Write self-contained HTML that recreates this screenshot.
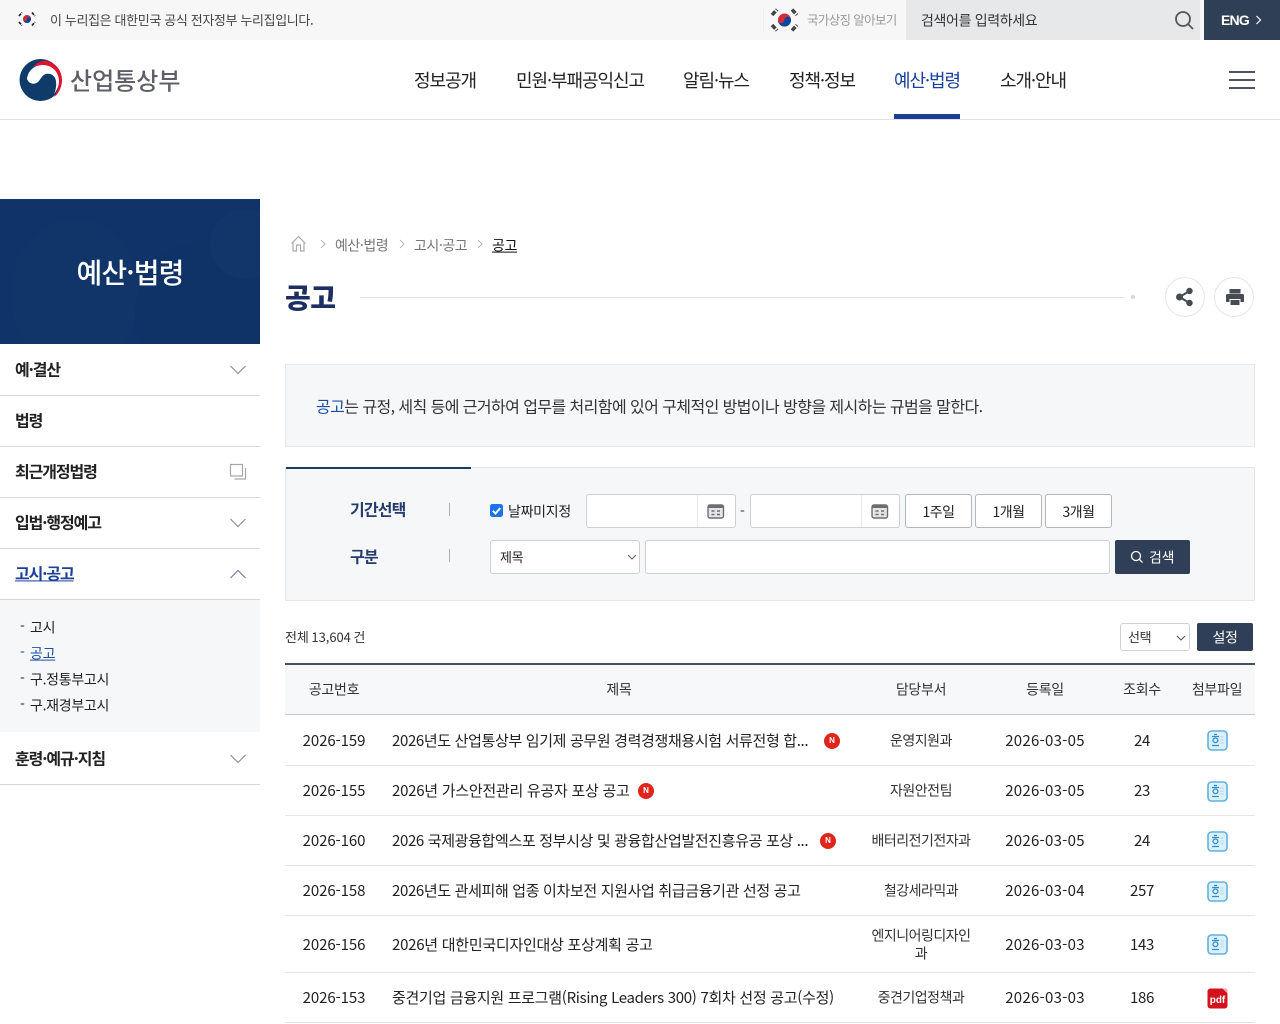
<!DOCTYPE html>
<html lang="ko"><head><meta charset="utf-8"><title>공고</title>
<style>
*{box-sizing:border-box}
html,body{margin:0;padding:0;width:1280px;height:1024px;overflow:hidden;background:#fff}
body{position:relative;font-family:"Liberation Sans","Noto Sans CJK KR",sans-serif;color:#222}
.a{position:absolute}
.t{position:absolute;white-space:nowrap;font-family:"Noto Sans CJK KR","Liberation Sans",sans-serif;transform:translateY(-50%);line-height:1.2}
.c{transform:translate(-50%,-50%)}
.nav{font-size:18px;letter-spacing:-1.05px;color:#222;top:81px}
.side{left:15px;font-size:16px;font-weight:700;letter-spacing:-1.1px;color:#222}
.ln{position:absolute;left:0;width:260px;height:1px;background:#d4d6d8}
.sub{left:30px;font-size:14px;letter-spacing:-.3px;color:#222}
.dash{left:20px;font-size:14px}
.row{position:absolute;left:285px;width:970px;height:1px;background:#e3e5e7}
.cell{font-size:15px;letter-spacing:-.35px;color:#222}
.num{font-size:15px;letter-spacing:-.1px;color:#222}
.date{font-size:15px;letter-spacing:.25px;color:#222}
.ttl{left:392px;font-size:15px;letter-spacing:-.35px;color:#222}
.dept{font-size:14px;letter-spacing:-.5px;color:#333}
.th{font-size:14px;letter-spacing:-.3px;color:#333;top:690px}
.box{position:absolute;background:#fff;border:1px solid #cdd1d5;border-radius:3px}
.btn{position:absolute;top:494px;height:34px;background:#fff;border:1px solid #b4b7ba;border-radius:3px;font-family:"Noto Sans CJK KR","Liberation Sans",sans-serif;font-size:14px;letter-spacing:-.5px;text-align:center;line-height:34px;color:#222}
.n{position:absolute;width:16px;height:16px;border-radius:50%;background:#e0261c;color:#fff;font:700 8px/16px "Liberation Sans",sans-serif;text-align:center}
.hwp{position:absolute;left:1207px;width:21px;height:21px}
</style></head><body>

<!-- top bar -->
<div class="a" style="left:0;top:0;width:1280px;height:40px;background:#f7f7f8"></div>
<svg class="a" style="left:18px;top:11px" width="18" height="16" viewBox="0 0 18 16"><circle cx="9" cy="8" r="4" fill="#cd2e3a"/><path d="M5 8a4 4 0 0 0 8 0a2 2 0 0 0-4 0a2 2 0 0 1-4 0z" fill="#0047a0"/><g stroke="#222" stroke-width="1.7" stroke-dasharray="3 1"><path d="M1 5l3-3.500M14 1.500l3 3.500M1 11l3 3.500M14 14.500l3-3.500"/></g></svg>
<div class="t" style="left:50px;top:19.500px;font-size:13px;letter-spacing:-.36px;color:#444">이 누리집은 대한민국 공식 전자정부 누리집입니다.</div>
<div class="a" style="left:763px;top:8px;width:1px;height:24px;background:#eee"></div>
<svg class="a" style="left:770px;top:8px" width="29" height="24" viewBox="0 0 29 24"><circle cx="14.500" cy="12" r="6.500" fill="#cd2e3a"/><path d="M8 12a6.500 6.500 0 0 0 13 0a3.250 3.250 0 0 0-6.500 0a3.250 3.250 0 0 1-6.500 0z" fill="#0047a0"/><g stroke="#444" stroke-width="3.500" stroke-dasharray="5 1.500"><path d="M2 7l5-5.500M22 1.500l5 5.500M2 17l5 5.500M22 22.500l5-5.500" /></g></svg>
<div class="t" style="left:807px;top:19px;font-size:12.500px;letter-spacing:-.65px;color:#9a9a9a">국가상징 알아보기</div>
<div class="a" style="left:906px;top:0;width:294px;height:40px;background:#e7e8ea"></div>
<div class="t" style="left:921px;top:21px;font-size:14px;letter-spacing:-.35px;color:#333">검색어를 입력하세요</div>
<svg class="a" style="left:1173px;top:9px" width="22" height="22" viewBox="0 0 22 22" fill="none" stroke="#555" stroke-width="1.800"><circle cx="10" cy="10" r="7"/><path d="M15 15l5 5"/></svg>
<div class="a" style="left:1204px;top:0;width:76px;height:40px;background:#2f3f55"></div>
<div class="t" style="left:1221px;top:20px;font:700 14px 'Liberation Sans',sans-serif;letter-spacing:-.8px;color:#fff">ENG</div>
<svg class="a" style="left:1255px;top:15px" width="7" height="10" viewBox="0 0 7 10" fill="none" stroke="#fff" stroke-width="1.200"><path d="M1.500 1l4 4-4 4"/></svg>

<!-- header -->
<svg class="a" style="left:19px;top:59px" width="44" height="42" viewBox="0 0 44 42">
<circle cx="21.500" cy="21" r="21" fill="#0f3b6b"/>
<path d="M14 8C18 3 24 1 28 2C37 4 43 12 43 21C43 29 39 35 35 38C38 33 40 27 40 22C40 13 33 6.500 25 6C21 5.800 17 6.500 14 8z" fill="#e1122d"/>
<path d="M8 20C9 11 16 6 24 6C33 6 40 13 40 22C40 27 38 31 35 35C37 31 37.500 26 37 22C36 16 31 14 27 15C23 16 22 20 19 23C15 26 10 25 8 20z" fill="#fff"/>
</svg>
<div class="t" style="left:70px;top:80px;font-size:24px;font-weight:500;letter-spacing:0;color:#5d6167">산업통상부</div>

<div class="t nav" style="left:414px">정보공개</div>
<div class="t nav" style="left:516px">민원·부패공익신고</div>
<div class="t nav" style="left:683px">알림·뉴스</div>
<div class="t nav" style="left:789px">정책·정보</div>
<div class="t nav" style="left:894px;color:#1b3f9c">예산·법령</div>
<div class="t nav" style="left:1000px">소개·안내</div>
<div class="a" style="left:1229px;top:71px;width:26px;height:2px;background:#4a5568"></div>
<div class="a" style="left:1229px;top:79px;width:26px;height:2px;background:#4a5568"></div>
<div class="a" style="left:1229px;top:87px;width:26px;height:2px;background:#4a5568"></div>
<div class="a" style="left:0;top:119px;width:1280px;height:1px;background:#e1e2e4"></div>
<div class="a" style="left:894px;top:114px;width:66px;height:5px;background:#1c3f9a"></div>

<!-- sidebar -->
<div class="a" style="left:0;top:199px;width:260px;height:145px;background:#10346a;overflow:hidden">
<div class="a" style="left:10px;top:20px;width:130px;height:150px;border-radius:50%;background:#113568"></div>
<div class="a" style="left:135px;top:40px;width:150px;height:150px;border-radius:50%;background:#0f3267"></div>
<div class="a" style="left:210px;top:10px;width:70px;height:70px;border-radius:50%;background:#11366a"></div>
</div>
<div class="t c" style="left:130px;top:273px;font-size:28px;font-weight:500;letter-spacing:-.9px;color:#fff">예산·법령</div>

<div class="t side" style="top:369px">예·결산</div>
<div class="ln" style="top:395px"></div>
<div class="t side" style="top:420px">법령</div>
<div class="ln" style="top:446px"></div>
<div class="t side" style="top:471px">최근개정법령</div>
<div class="ln" style="top:497px"></div>
<div class="t side" style="top:522px">입법·행정예고</div>
<div class="ln" style="top:548px"></div>
<div class="t side" style="top:573px;color:#1c3f9a;text-decoration:underline">고시·공고</div>
<div class="ln" style="top:599px"></div>
<div class="a" style="left:0;top:600px;width:260px;height:132px;background:#f5f7f9"></div>
<div class="t dash" style="top:627px">-</div><div class="t sub" style="top:628px">고시</div>
<div class="t dash" style="top:653px;color:#1c3f9a">-</div><div class="t sub" style="top:654px;color:#1c4fa8;text-decoration:underline">공고</div>
<div class="t dash" style="top:679px">-</div><div class="t sub" style="top:680px">구.정통부고시</div>
<div class="t dash" style="top:705px">-</div><div class="t sub" style="top:706px">구.재경부고시</div>
<div class="t side" style="top:758px">훈령·예규·지침</div>
<div class="ln" style="top:784px"></div>
<svg class="a" style="left:0;top:0" width="260" height="790" fill="none" stroke="#8d9299" stroke-width="1.200">
<path d="M230.500 366l7.500 7.500 7.500-7.500M230.500 519l7.500 7.500 7.500-7.500M230.500 755l7.500 7.500 7.500-7.500"/>
<path d="M230.500 578l7.500-7.500 7.500 7.500" stroke="#6f7fa8"/>
<path d="M230.500 464.500h12v11.500h-12zM245.500 468v11h-11" stroke="#a5a8ac"/>
</svg>

<!-- breadcrumb -->
<svg class="a" style="left:290px;top:235px" width="18" height="18" viewBox="0 0 18 18" fill="none" stroke="#a8abae" stroke-width="1.200"><path d="M1.500 8.500L8.500 1.500l7 7M3 7v9h3.500v-6h4v6H14V7"/></svg>
<svg class="a" style="left:320px;top:239px" width="170" height="10" fill="none" stroke="#b3b5b8" stroke-width="1"><path d="M1 1l4 4-4 4M80 1l4 4-4 4M158 1l4 4-4 4"/></svg>
<div class="t" style="left:335px;top:246px;font-size:14px;letter-spacing:-.45px;color:#777">예산·법령</div>
<div class="t" style="left:414px;top:246px;font-size:14px;letter-spacing:-.45px;color:#777">고시·공고</div>
<div class="t" style="left:492px;top:246px;font-size:14px;letter-spacing:-.35px;color:#111;text-decoration:underline">공고</div>

<div class="t" style="left:285px;top:298px;font-size:28px;font-weight:900;letter-spacing:-.5px;color:#1b2f63">공고</div>
<div class="a" style="left:360px;top:297px;width:764px;height:1px;background:#dfe0e2"></div>
<div class="a" style="left:1131px;top:295px;width:4px;height:4px;border-radius:50%;background:#d4d6d8"></div>
<div class="a" style="left:1165px;top:277px;width:40px;height:40px;border-radius:50%;border:1px solid #e5e6e8;background:#fff"></div>
<div class="a" style="left:1214px;top:277px;width:40px;height:40px;border-radius:50%;border:1px solid #e5e6e8;background:#fff"></div>
<svg class="a" style="left:1175px;top:287px" width="20" height="20" viewBox="0 0 20 20" fill="#474b52"><circle cx="4.500" cy="10" r="3.500"/><circle cx="14.500" cy="4" r="3.200"/><circle cx="14.500" cy="16" r="3.200"/><path d="M4.500 10L14.500 4M4.500 10l10 6" stroke="#474b52" stroke-width="2"/></svg>
<svg class="a" style="left:1225px;top:287px" width="20" height="20" viewBox="0 0 20 20" fill="#474b52"><path d="M4.500 2h11v4.500h-11zM2.500 7h15A1.500 1.500 0 0 1 19 8.500V15h-3.500v-3h-11v3H1V8.500A1.500 1.500 0 0 1 2.500 7zM5.500 13h9v5h-9z"/></svg>

<!-- notice -->
<div class="a" style="left:285px;top:364px;width:970px;height:83px;background:#f5f7f9;border:1px solid #e6e8ea"></div>
<div class="t" style="left:316px;top:406px;font-size:16px;letter-spacing:-.58px;color:#333"><span style="color:#1c4fa8">공고</span>는 규정, 세칙 등에 근거하여 업무를 처리함에 있어 구체적인 방법이나 방향을 제시하는 규범을 말한다.</div>

<!-- search -->
<div class="a" style="left:285px;top:467px;width:970px;height:134px;background:#f5f7f9;border:1px solid #e3e5e7"></div>
<div class="a" style="left:286px;top:467px;width:185px;height:2px;background:#1e3a5f"></div>
<div class="t" style="left:350px;top:509px;font-size:16px;font-weight:700;letter-spacing:-.85px;color:#263c6e">기간선택</div>
<div class="t" style="left:350px;top:556px;font-size:16px;font-weight:700;letter-spacing:-.8px;color:#263c6e">구분</div>
<div class="a" style="left:449px;top:503px;width:1px;height:13px;background:#aeb2b6"></div>
<div class="a" style="left:449px;top:549px;width:1px;height:13px;background:#aeb2b6"></div>
<svg class="a" style="left:490px;top:504px" width="13" height="13" viewBox="0 0 13 13"><rect width="13" height="13" rx="2.500" fill="#1a73e8"/><path d="M2.800 6.800l2.700 2.700 4.800-5.500" fill="none" stroke="#fff" stroke-width="2"/></svg>
<div class="t" style="left:508px;top:512px;font-size:14px;letter-spacing:-.3px;color:#222">날짜미지정</div>
<div class="box" style="left:586px;top:494px;width:150px;height:34px"></div>
<div class="a" style="left:697px;top:495px;width:1px;height:32px;background:#e8eaec"></div>
<div class="t" style="left:740px;top:512px;font-size:14px;color:#333">-</div>
<div class="box" style="left:750px;top:494px;width:150px;height:34px"></div>
<div class="a" style="left:861px;top:495px;width:1px;height:32px;background:#e8eaec"></div>
<svg class="a" style="left:707px;top:503px" width="18" height="16" viewBox="0 0 18 16"><rect x="1" y="2" width="15.500" height="13" rx="2" fill="#e4e5e6" stroke="#6b6f74" stroke-width="1.400"/><rect x="1" y="1.500" width="15.500" height="3.500" rx="1.500" fill="#6b6f74"/><path d="M4.500 8h3M10 8h3M4.500 11.500h3M10 11.500h3" stroke="#6b6f74" stroke-width="1.400"/></svg>
<svg class="a" style="left:871px;top:503px" width="18" height="16" viewBox="0 0 18 16"><rect x="1" y="2" width="15.500" height="13" rx="2" fill="#e4e5e6" stroke="#6b6f74" stroke-width="1.400"/><rect x="1" y="1.500" width="15.500" height="3.500" rx="1.500" fill="#6b6f74"/><path d="M4.500 8h3M10 8h3M4.500 11.500h3M10 11.500h3" stroke="#6b6f74" stroke-width="1.400"/></svg>
<div class="btn" style="left:905px;width:67px">1주일</div>
<div class="btn" style="left:975px;width:67px">1개월</div>
<div class="btn" style="left:1045px;width:67px">3개월</div>
<div class="box" style="left:490px;top:540px;width:150px;height:34px"></div>
<div class="t" style="left:500px;top:557px;font-size:13px;letter-spacing:-.3px;color:#222">제목</div>
<svg class="a" style="left:627px;top:553px" width="10" height="8" fill="none" stroke="#666" stroke-width="1.100"><path d="M1 2l4 4 4-4"/></svg>
<div class="box" style="left:645px;top:540px;width:465px;height:34px"></div>
<div class="a" style="left:1115px;top:540px;width:75px;height:34px;background:#2f3f58;border-radius:2px"></div>
<svg class="a" style="left:1130px;top:550px" width="14" height="14" fill="none" stroke="#fff" stroke-width="1.300"><circle cx="6" cy="6" r="4.500"/><path d="M9.500 9.500l3 3"/></svg>
<div class="t" style="left:1149px;top:558px;font-size:14px;letter-spacing:-.3px;color:#fff">검색</div>

<!-- list head -->
<div class="t" style="left:285px;top:637px;font-size:13px;letter-spacing:-.05px;word-spacing:-1px;color:#333">전체 13,604 건</div>
<div class="box" style="left:1120px;top:623px;width:70px;height:28px;border-color:#d0d3d6"></div>
<div class="t" style="left:1128px;top:637px;font-size:13px;letter-spacing:-.3px;color:#333">선택</div>
<svg class="a" style="left:1176px;top:634px" width="10" height="8" fill="none" stroke="#555" stroke-width="1.100"><path d="M1 2l4 4 4-4"/></svg>
<div class="a" style="left:1197px;top:623px;width:56px;height:28px;background:#2f3f58;border-radius:2px"></div>
<div class="t c" style="left:1225px;top:638px;font-size:14px;letter-spacing:-.4px;color:#fff">설정</div>

<!-- table -->
<div class="a" style="left:285px;top:665px;width:970px;height:49px;background:#f6f8f9"></div>
<div class="a" style="left:285px;top:663px;width:970px;height:2px;background:#465164"></div>
<div class="a" style="left:285px;top:714px;width:970px;height:1px;background:#c5c8cc"></div>
<div class="t th c" style="left:334px">공고번호</div>
<div class="t th c" style="left:619px">제목</div>
<div class="t th c" style="left:921px">담당부서</div>
<div class="t th c" style="left:1045px">등록일</div>
<div class="t th c" style="left:1142px">조회수</div>
<div class="t th c" style="left:1217px">첨부파일</div>

<div class="row" style="top:765px"></div><div class="row" style="top:815px"></div><div class="row" style="top:865px"></div><div class="row" style="top:915px"></div><div class="row" style="top:972px"></div><div class="row" style="top:1022px"></div>

<div class="t num c" style="left:334px;top:741px">2026-159</div>
<div class="t ttl" style="top:741px">2026년도 산업통상부 임기제 공무원 경력경쟁채용시험 서류전형 합...</div>
<div class="n" style="left:824px;top:733px">N</div>
<div class="t dept c" style="left:921px;top:741px">운영지원과</div>
<div class="t date c" style="left:1045px;top:741px">2026-03-05</div>
<div class="t cell c" style="left:1142px;top:741px">24</div>

<div class="t num c" style="left:334px;top:791px">2026-155</div>
<div class="t ttl" style="top:791px;letter-spacing:-.26px">2026년 가스안전관리 유공자 포상 공고</div>
<div class="n" style="left:638px;top:783px">N</div>
<div class="t dept c" style="left:921px;top:791px">자원안전팀</div>
<div class="t date c" style="left:1045px;top:791px">2026-03-05</div>
<div class="t cell c" style="left:1142px;top:791px">23</div>

<div class="t num c" style="left:334px;top:841px">2026-160</div>
<div class="t ttl" style="top:841px">2026 국제광융합엑스포 정부시상 및 광융합산업발전진흥유공 포상 ...</div>
<div class="n" style="left:820px;top:833px">N</div>
<div class="t dept c" style="left:921px;top:841px">배터리전기전자과</div>
<div class="t date c" style="left:1045px;top:841px">2026-03-05</div>
<div class="t cell c" style="left:1142px;top:841px">24</div>

<div class="t num c" style="left:334px;top:891px">2026-158</div>
<div class="t ttl" style="top:891px">2026년도 관세피해 업종 이차보전 지원사업 취급금융기관 선정 공고</div>
<div class="t dept c" style="left:921px;top:891px">철강세라믹과</div>
<div class="t date c" style="left:1045px;top:891px">2026-03-04</div>
<div class="t cell c" style="left:1142px;top:891px">257</div>

<div class="t num c" style="left:334px;top:945px">2026-156</div>
<div class="t ttl" style="top:945px;letter-spacing:-.26px">2026년 대한민국디자인대상 포상계획 공고</div>
<div class="t dept c" style="left:921px;top:936px">엔지니어링디자인</div>
<div class="t dept c" style="left:921px;top:954px">과</div>
<div class="t date c" style="left:1045px;top:945px">2026-03-03</div>
<div class="t cell c" style="left:1142px;top:945px">143</div>

<div class="t num c" style="left:334px;top:998px">2026-153</div>
<div class="t ttl" style="top:998px;letter-spacing:-.3px">중견기업 금융지원 프로그램(Rising Leaders 300) 7회차 선정 공고(수정)</div>
<div class="t dept c" style="left:921px;top:998px">중견기업정책과</div>
<div class="t date c" style="left:1045px;top:998px">2026-03-03</div>
<div class="t cell c" style="left:1142px;top:998px">186</div>

<svg width="0" height="0" style="position:absolute"><defs><g id="h"><rect x="1" y="1" width="19" height="19" rx="3.500" fill="#dcf0fc" stroke="#62b1e0" stroke-width="1.600"/><path d="M7 4.500h3M5 6.500h7M8.500 8a2.500 2.300 0 1 1-.1 0M5 15.500h7" fill="none" stroke="#2a8fd0" stroke-width="1.200"/><path d="M13.500 7h3M13.500 10h3M13.500 13h3" stroke="#a9d5ef" stroke-width="1"/></g></defs></svg>
<svg class="hwp" style="top:730px" viewBox="0 0 21 21"><use href="#h"/></svg>
<svg class="hwp" style="top:781px" viewBox="0 0 21 21"><use href="#h"/></svg>
<svg class="hwp" style="top:831px" viewBox="0 0 21 21"><use href="#h"/></svg>
<svg class="hwp" style="top:881px" viewBox="0 0 21 21"><use href="#h"/></svg>
<svg class="hwp" style="top:934px" viewBox="0 0 21 21"><use href="#h"/></svg>
<svg class="hwp" style="top:988px" viewBox="0 0 21 21"><rect x="0.500" y="0.500" width="20" height="20" rx="3" fill="#d3121b"/><path d="M15.500.500h2a3 3 0 0 1 3 3v2z" fill="#f2a5a5"/><text x="10.500" y="15" text-anchor="middle" font-family="Liberation Sans,sans-serif" font-size="10" font-weight="700" fill="#fff">pdf</text></svg>

</body></html>
